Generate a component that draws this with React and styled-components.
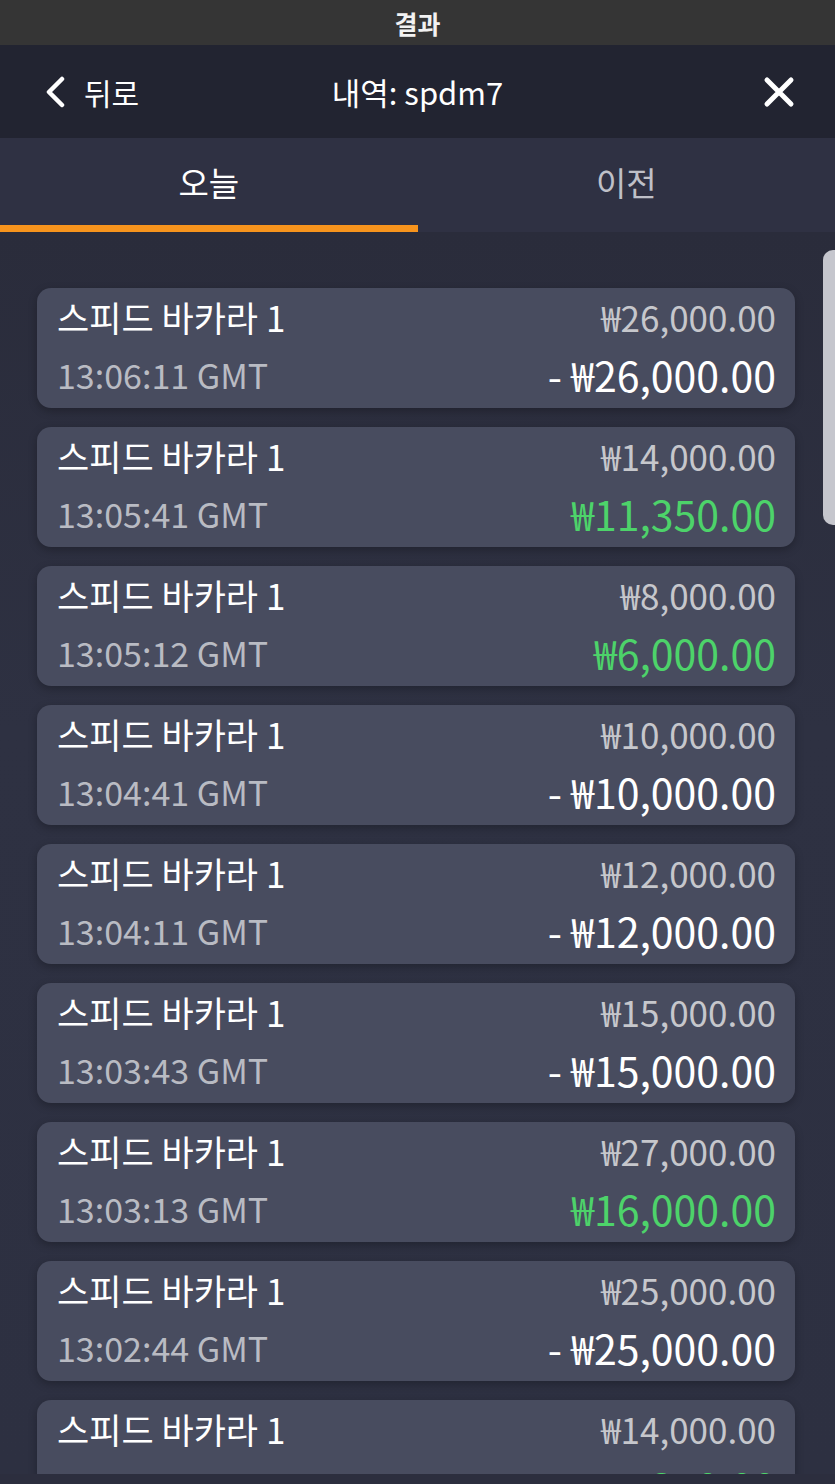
import React from 'react';
import styled, { createGlobalStyle } from 'styled-components';

const GlobalStyle = createGlobalStyle`
  html, body {
    margin: 0;
    padding: 0;
    background: #2c2e3e;
  }
  body {
    font-family: "Noto Sans CJK KR", "Noto Sans", sans-serif;
    color: #fff;
  }
`;

const Page = styled.div`
  width: 835px;
  height: 1484px;
  display: flex;
  flex-direction: column;
  overflow: hidden;
  background: #2c2e3e;
`;

const StatusBar = styled.div`
  height: 45px;
  background: #353535;
  display: flex;
  align-items: center;
  justify-content: center;
  font-size: 25px;
  font-weight: 700;
  color: #f2f2f2;
`;

const Header = styled.div`
  height: 93px;
  background: #222431;
  display: flex;
  align-items: center;
  justify-content: space-between;
  padding: 0 40px 0 44px;
  position: relative;
`;

const BackButton = styled.div`
  display: flex;
  align-items: center;
  gap: 18px;
  font-size: 30px;
  color: #fff;
`;

const HeaderTitle = styled.div`
  position: absolute;
  left: 0;
  right: 0;
  text-align: center;
  font-size: 31px;
  color: #fff;
  pointer-events: none;
`;

const Tabs = styled.div`
  height: 94px;
  background: #2f3143;
  display: flex;
`;

const Tab = styled.div`
  flex: 1;
  display: flex;
  align-items: center;
  justify-content: center;
  font-size: 33px;
  color: ${p => (p.$active ? '#ffffff' : '#bfc0c8')};
  border-bottom: 7px solid ${p => (p.$active ? '#f7941d' : 'transparent')};
`;

const Content = styled.div`
  height: 1242px;
  flex-shrink: 0;
  position: relative;
  overflow: hidden;
  background: linear-gradient(#2a2c3b, #2e3142 40%, #2d3041);
`;

const List = styled.div`
  display: flex;
  flex-direction: column;
  gap: 19px;
  padding: 56px 40px 0 37px;
`;

const Card = styled.div`
  height: 120px;
  flex-shrink: 0;
  box-sizing: border-box;
  background: #484c5f;
  border-radius: 14px;
  box-shadow: 0 3px 8px rgba(0, 0, 0, 0.25);
  padding: 4px 19px 0 20px;
  display: flex;
  flex-direction: column;
`;

const Row = styled.div`
  display: flex;
  align-items: center;
  justify-content: space-between;
  height: ${p => p.$h}px;
  flex-shrink: 0;
  white-space: nowrap;
`;

const GameName = styled.div`
  font-size: 35px;
  color: #fff;
`;

const Time = styled.div`
  font-size: 34px;
  color: #b9bbc3;
`;

const Stake = styled.div`
  font-size: 35px;
  color: #c6c7cc;
`;

const Result = styled.div`
  font-size: 41px;
  font-weight: 400;
  color: ${p => (p.$win ? '#4dd36a' : '#ffffff')};
`;

const ScrollThumb = styled.div`
  position: absolute;
  top: 18px;
  right: -10px;
  width: 22px;
  height: 275px;
  background: #c5c6cd;
  border-radius: 10px;
`;

const BottomStrip = styled.div`
  flex: 1;
  background: #2c2e3e;
`;

const rows = [
  { time: '13:06:11 GMT', stake: '₩26,000.00', result: '- ₩26,000.00', win: false },
  { time: '13:05:41 GMT', stake: '₩14,000.00', result: '₩11,350.00', win: true },
  { time: '13:05:12 GMT', stake: '₩8,000.00', result: '₩6,000.00', win: true },
  { time: '13:04:41 GMT', stake: '₩10,000.00', result: '- ₩10,000.00', win: false },
  { time: '13:04:11 GMT', stake: '₩12,000.00', result: '- ₩12,000.00', win: false },
  { time: '13:03:43 GMT', stake: '₩15,000.00', result: '- ₩15,000.00', win: false },
  { time: '13:03:13 GMT', stake: '₩27,000.00', result: '₩16,000.00', win: true },
  { time: '13:02:44 GMT', stake: '₩25,000.00', result: '- ₩25,000.00', win: false },
  { time: '13:02:14 GMT', stake: '₩14,000.00', result: '₩11,350.00', win: true },
];

function ChevronLeft() {
  return (
    <svg width="22" height="32" viewBox="0 0 22 32">
      <path d="M18 3 L5 16 L18 29" fill="none" stroke="#fff" strokeWidth="4.5" strokeLinecap="round" strokeLinejoin="round" />
    </svg>
  );
}

function CloseIcon() {
  return (
    <svg width="32" height="32" viewBox="0 0 32 32">
      <path d="M4 4 L28 28 M28 4 L4 28" fill="none" stroke="#fff" strokeWidth="5" strokeLinecap="round" />
    </svg>
  );
}

export default function App() {
  return (
    <Page>
      <GlobalStyle />
      <StatusBar>결과</StatusBar>
      <Header>
        <BackButton>
          <ChevronLeft />
          뒤로
        </BackButton>
        <HeaderTitle>내역: spdm7</HeaderTitle>
        <CloseIcon />
      </Header>
      <Tabs>
        <Tab $active>오늘</Tab>
        <Tab>이전</Tab>
      </Tabs>
      <Content>
        <List>
          {rows.map((r, i) => (
            <Card key={i}>
              <Row $h={48}>
                <GameName>스피드 바카라 1</GameName>
                <Stake>{r.stake}</Stake>
              </Row>
              <Row $h={68}>
                <Time>{r.time}</Time>
                <Result $win={r.win}>{r.result}</Result>
              </Row>
            </Card>
          ))}
        </List>
        <ScrollThumb />
      </Content>
      <BottomStrip />
    </Page>
  );
}
